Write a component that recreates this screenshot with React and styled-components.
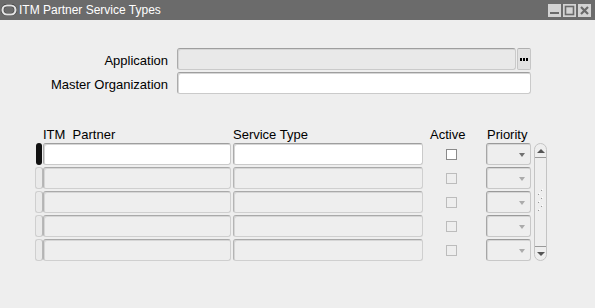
import React from "react";
import styled, { createGlobalStyle, css } from "styled-components";

const GlobalStyle = createGlobalStyle`
  html, body { margin: 0; padding: 0; background: #eeeeee; }
  body { font-family: "Liberation Sans", Arial, sans-serif; }
`;

const Window = styled.div`
  width: 595px;
  height: 308px;
  display: flex;
  flex-direction: column;
  background: #eeeeee;
  overflow: hidden;
`;

const TitleBar = styled.div`
  height: 20px;
  flex: none;
  background: #6b6b6b;
  display: flex;
  align-items: center;
  padding: 0 4px 0 1px;
`;

const TitleText = styled.span`
  color: #ffffff;
  font-size: 12px;
  margin-left: 2px;
`;

const WinButtons = styled.div`
  margin-left: auto;
  display: flex;
  gap: 2px;
`;

const WinButton = styled.div`
  width: 13px;
  height: 13px;
  background: #d3d3d3;
  display: flex;
  align-items: center;
  justify-content: center;
`;

const Body = styled.div`
  flex: 1;
  display: flex;
  flex-direction: column;
  padding-top: 28px;
`;

const Form = styled.div`
  display: flex;
  flex-direction: column;
  gap: 2px;
`;

const FormRow = styled.div`
  display: flex;
  align-items: center;
  height: 22px;
`;

const Label = styled.label`
  width: 177px;
  box-sizing: border-box;
  padding-right: 9px;
  text-align: right;
  font-size: 13px;
  color: #000;
  line-height: 22px;
  padding-top: 3px;
`;

const fieldBorder = css`
  box-sizing: border-box;
  border: 1px solid #cacaca;
  border-top-color: #9e9e9e;
  border-left-color: #ababab;
  border-radius: 3px;
  box-shadow: inset 1px 1px 0 #d6d6d6;
`;

const TextField = styled.div`
  ${fieldBorder};
  width: ${(p) => p.$w}px;
  height: 22px;
  background: ${(p) => (p.$enabled ? "#ffffff" : p.$dim ? "#e9e9e9" : "#eeeeee")};
  ${(p) => !p.$enabled && !p.$dim && css`
    border-color: #cfcfcf;
    border-top-color: #a9a9a9;
    border-left-color: #b4b4b4;
  `}
`;

const EllipsisButton = styled.div`
  box-sizing: border-box;
  width: 14px;
  height: 22px;
  margin-left: 1px;
  background: #e2e2e2;
  border: 1px solid #c6c6c6;
  border-top-color: #b0b0b0;
  border-radius: 2px;
  display: flex;
  align-items: center;
  justify-content: center;
`;

const Dots = styled.span`
  display: flex;
  gap: 1px;
  & > i {
    width: 2px;
    height: 3px;
    background: #000;
  }
`;

const Table = styled.div`
  margin-top: 33px;
  margin-left: 35px;
  display: grid;
  grid-template-columns: 8px 190px 190px 63px 48px 13px;
  grid-template-rows: 14px repeat(5, 22px);
  row-gap: 2px;
`;

const HeaderCell = styled.div`
  font-size: 13px;
  line-height: 16px;
  color: #000;
  white-space: pre;
  padding-left: ${(p) => p.$pad || 0}px;
`;

const Indicator = styled.div`
  box-sizing: border-box;
  width: ${(p) => (p.$current ? 6 : 8)}px;
  margin-left: ${(p) => (p.$current ? 1 : 0)}px;
  height: 22px;
  border-radius: 3px;
  ${(p) =>
    p.$current
      ? css`
          background: #111111;
        `
      : css`
          background: #eaeaea;
          border: 1px solid #cfcfcf;
          border-right-color: #b8b8b8;
        `}
`;

const CheckCell = styled.div`
  display: flex;
  align-items: center;
  padding-left: 23px;
`;

const CheckBox = styled.div`
  box-sizing: border-box;
  width: 11px;
  height: 11px;
  border: 1px solid ${(p) => (p.$enabled ? "#8a8a8a" : "#bcbcbc")};
  background: ${(p) => (p.$enabled ? "#ffffff" : "transparent")};
`;

const Dropdown = styled.div`
  ${fieldBorder};
  width: 45px;
  height: 22px;
  background: #eeeeee;
  border-color: #c8c8c8;
  border-top-color: #9a9a9a;
  border-left-color: #a6a6a6;
  display: flex;
  align-items: center;
  justify-content: flex-end;
  padding-right: 5px;
`;

const Arrow = styled.span`
  width: 0;
  height: 0;
  border-left: 3.5px solid transparent;
  border-right: 3.5px solid transparent;
  border-top: 4px solid ${(p) => (p.$enabled ? "#707070" : "#ababab")};
  margin-top: 1px;
`;

const Scrollbar = styled.div`
  grid-column: 6;
  grid-row: 2 / span 5;
  box-sizing: border-box;
  width: 13px;
  border: 1px solid #c4c4c4;
  border-radius: 7px;
  background: #eeeeee;
  display: flex;
  flex-direction: column;
`;

const ScrollEnd = styled.div`
  height: 13px;
  flex: none;
  display: flex;
  align-items: center;
  justify-content: center;
  ${(p) => (p.$top ? "border-bottom" : "border-top")}: 1px solid #9a9a9a;
`;

const ScrollTrack = styled.div`
  flex: 1;
  display: flex;
  align-items: center;
  justify-content: center;
`;

const UpArrow = styled.span`
  width: 0;
  height: 0;
  border-left: 4px solid transparent;
  border-right: 4px solid transparent;
  border-bottom: 4px solid #555;
`;

const DownArrow = styled.span`
  width: 0;
  height: 0;
  border-left: 4px solid transparent;
  border-right: 4px solid transparent;
  border-top: 4px solid #555;
`;

const Grip = () => (
  <svg width="7" height="28" viewBox="0 0 7 28">
    {[0, 1, 2, 3, 4, 5].map((i) => (
      <g key={i}>
        <rect x={i % 2 ? 1 : 4} y={i * 4 + 2} width="1" height="1" fill="#999" />
        <rect x={i % 2 ? 2 : 5} y={i * 4 + 1} width="1" height="1" fill="#fff" />
      </g>
    ))}
  </svg>
);

const OracleIcon = () => (
  <svg width="16" height="12" viewBox="0 0 16 12">
    <rect x="1.5" y="1.5" width="13" height="9" rx="4.5" fill="none" stroke="#3a3a3a" strokeWidth="3.2" />
    <rect x="1.5" y="1.5" width="13" height="9" rx="4.5" fill="none" stroke="#e4e4e4" strokeWidth="2.2" />
  </svg>
);

const rows = [0, 1, 2, 3, 4];

export default function App() {
  return (
    <>
      <GlobalStyle />
      <Window>
        <TitleBar>
          <OracleIcon />
          <TitleText>ITM Partner Service Types</TitleText>
          <WinButtons>
            <WinButton>
              <svg width="13" height="13" viewBox="0 0 13 13">
                <rect x="2" y="8" width="9" height="2" fill="#6a6a6a" />
              </svg>
            </WinButton>
            <WinButton>
              <svg width="13" height="13" viewBox="0 0 13 13">
                <rect x="2.5" y="2.5" width="8" height="8" fill="none" stroke="#6a6a6a" strokeWidth="1.6" />
              </svg>
            </WinButton>
            <WinButton>
              <svg width="13" height="13" viewBox="0 0 13 13">
                <path d="M3 3 L10 10 M10 3 L3 10" stroke="#6a6a6a" strokeWidth="2.2" />
              </svg>
            </WinButton>
          </WinButtons>
        </TitleBar>
        <Body>
          <Form>
            <FormRow>
              <Label>Application</Label>
              <TextField $w={339} $dim />
              <EllipsisButton>
                <Dots>
                  <i />
                  <i />
                  <i />
                </Dots>
              </EllipsisButton>
            </FormRow>
            <FormRow>
              <Label>Master Organization</Label>
              <TextField $w={354} $enabled />
            </FormRow>
          </Form>
          <Table>
            <div />
            <HeaderCell>ITM  Partner</HeaderCell>
            <HeaderCell>Service Type</HeaderCell>
            <HeaderCell $pad={7}>Active</HeaderCell>
            <HeaderCell $pad={1}>Priority</HeaderCell>
            <div />
            {rows.map((r) => {
              const cur = r === 0;
              return (
                <React.Fragment key={r}>
                  <Indicator $current={cur} />
                  <TextField $w={188} $enabled={cur} />
                  <TextField $w={190} $enabled={cur} />
                  <CheckCell>
                    <CheckBox $enabled={cur} />
                  </CheckCell>
                  <Dropdown>
                    <Arrow $enabled={cur} />
                  </Dropdown>
                </React.Fragment>
              );
            })}
            <Scrollbar>
              <ScrollEnd $top>
                <UpArrow />
              </ScrollEnd>
              <ScrollTrack>
                <Grip />
              </ScrollTrack>
              <ScrollEnd>
                <DownArrow />
              </ScrollEnd>
            </Scrollbar>
          </Table>
        </Body>
      </Window>
    </>
  );
}
